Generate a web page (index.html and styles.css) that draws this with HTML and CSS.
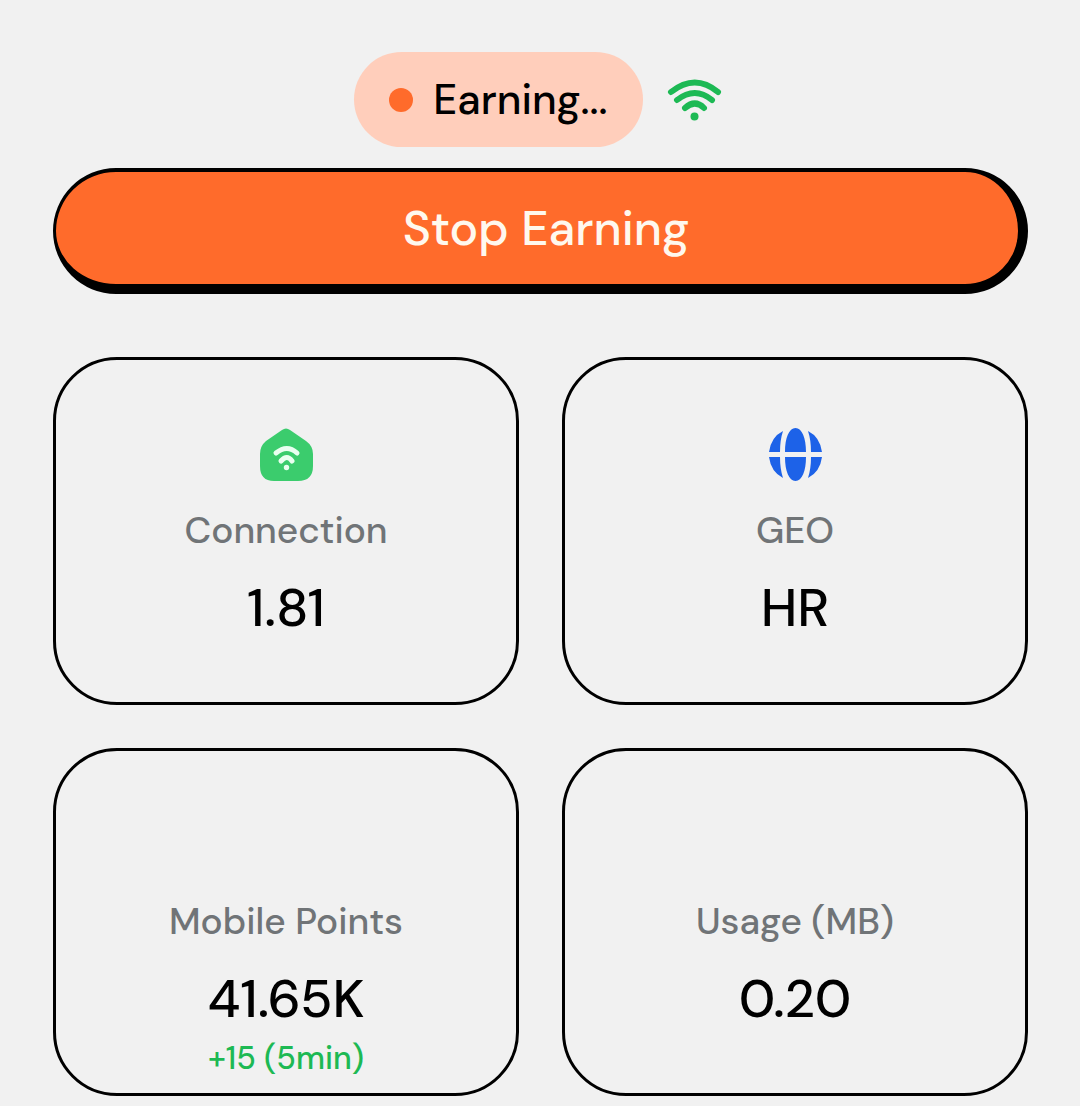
FILE: index.html
```html
<!DOCTYPE html>
<html lang="en">
<head>
    <meta charset="UTF-8">
    <meta name="viewport" content="width=device-width, initial-scale=1.0">
    <title>Earning</title>
    <link rel="stylesheet" href="styles.css">
</head>
<body>
    <main class="dashboard">
        <div class="status">
            <div class="status-pill"><span class="dot"></span>Earning...</div>
            <svg class="icon wifi" viewBox="0 0 64 64" aria-hidden="true">
                <path d="M8 24Q32 5 55 24M14 32Q32 18 49 32M22 40Q32 31 41 40"/>
                <circle cx="31.500" cy="48.500" r="4"/>
            </svg>
        </div>

        <button class="stop-btn" type="button">Stop Earning</button>

        <div class="cards">
            <section class="card">
                <svg class="icon" viewBox="0 0 64 64" aria-hidden="true">
                    <path class="home" d="M28 7Q32 4 36 7L52 18Q59 23 59 31V43Q59 58 44 58H20Q6 58 6 43V31Q6 23 12 18Z"/>
                    <path class="home-wave" d="M22 30Q33 21 43 30M27 38Q33 31 38 38"/>
                    <circle class="home-dot" cx="32.500" cy="44.500" r="2.700"/>
                </svg>
                <h2 class="label">Connection</h2>
                <p class="value">1.81</p>
            </section>
            <section class="card">
                <svg class="icon globe" viewBox="0 0 64 64" aria-hidden="true">
                    <path d="M22 29C22 15 26 5 32.500 5S43 15 43 29ZM22 34H43C43 48 39 58 32.500 58S22 48 22 34Z"/>
                    <path d="M6 29Q8 14 20 8Q17 17 17 29ZM6 34H17Q17 46 20 55Q8 49 6 34ZM59 29Q57 14 45 8Q48 17 48 29ZM59 34H48Q48 46 45 55Q57 49 59 34Z"/>
                </svg>
                <h2 class="label">GEO</h2>
                <p class="value">HR</p>
            </section>
            <section class="card">
                <div class="icon"></div>
                <h2 class="label">Mobile Points</h2>
                <p class="value">41.65K</p>
                <p class="delta">+15 (5min)</p>
            </section>
            <section class="card">
                <div class="icon"></div>
                <h2 class="label">Usage (MB)</h2>
                <p class="value">0.20</p>
            </section>
        </div>
    </main>
</body>
</html>
```

FILE: styles.css
```css
*{padding: 0;margin: 0;box-sizing: border-box;}
body{
    background-color: #f1f1f1;
    color: #000;
    font-family: "DM Sans", Lato, sans-serif;
    font-weight: 500;
}
.dashboard{
    padding: 52px 52px 10px 53px;
}
.status{
    display: flex;
    justify-content: center;
    align-items: center;
    gap: 20px;
}
.status-pill{
    display: flex;
    align-items: center;
    gap: 20px;
    padding: 0 35px;
    line-height: 95px;
    border-radius: 48px;
    background-color: #ffcebb;
    font-size: 42px;
}
.dot{
    width: 24px;
    height: 24px;
    border-radius: 50%;
    background-color: #ff6b2b;
}
.icon{
    flex: none;
    width: 64px;
    height: 64px;
}
.wifi path{
    fill: none;
    stroke: #1db954;
    stroke-width: 6;
    stroke-linecap: round;
}
.wifi circle{
    fill: #1db954;
}
.stop-btn{
    display: block;
    width: 100%;
    margin-top: 21px;
    padding: 2px 0 0 18px;
    border: solid #000;
    border-width: 4px 10px 10px 3px;
    border-radius: 63px;
    background-color: #ff6b2b;
    color: #fff8ee;
    font: inherit;
    font-size: 48px;
    line-height: 110px;
}

/* cards */
.cards{
    display: grid;
    grid-template-columns: 1fr 1fr;
    grid-auto-rows: minmax(348px, auto);
    gap: 43px;
    margin-top: 63px;
}
.card{
    display: flex;
    flex-direction: column;
    align-items: center;
    padding-top: 63px;
    border: 3px solid #000;
    border-radius: 64px;
    text-align: center;
}
.label{
    margin-top: 15px;
    color: #707477;
    font-size: 37px;
    font-weight: 500;
    line-height: 56px;
}
.value{
    margin-top: 18px;
    font-size: 53px;
    line-height: 64px;
}
.delta{
    margin-top: 3px;
    color: #1db954;
    font-size: 32px;
    line-height: 48px;
}
.home{
    fill: #3bcc6d;
}
.home-wave{
    fill: none;
    stroke: #e9fff0;
    stroke-width: 5;
    stroke-linecap: round;
}
.home-dot{
    fill: #e9fff0;
}
.globe{
    fill: #1d62e8;
}
```
